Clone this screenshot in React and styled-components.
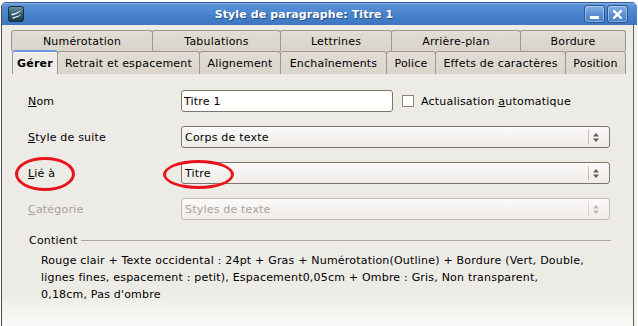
import React from 'react';
import styled, { createGlobalStyle } from 'styled-components';

const GlobalStyle = createGlobalStyle`
  html, body {
    margin: 0;
    padding: 0;
    background: #fff;
    overflow: hidden;
  }
  body {
    font-family: "DejaVu Sans", "Liberation Sans", sans-serif;
    font-size: 11px;
    letter-spacing: 0.2px;
    color: #000;
  }
`;

const Window = styled.div`
  margin: 2px 0 0 1px;
  width: 636px;
  height: 324px;
  box-sizing: border-box;
  display: flex;
  flex-direction: column;
  border-radius: 5px 5px 0 0;
  overflow: hidden;
  border-left: 1px solid #4e4e4e;
  background: #f4f2ef;
`;

const TitleBar = styled.div`
  height: 23px;
  flex: none;
  box-sizing: border-box;
  display: flex;
  align-items: center;
  padding: 0 9px 0 6px;
  border-top: 1px solid #355f98;
  background: linear-gradient(to bottom, #8cb4e6 0, #5a91d6 2px, #4883cd 50%, #3d76c2 100%);
`;

const TitleText = styled.div`
  flex: 1;
  text-align: center;
  color: #fff;
  font-weight: bold;
  font-size: 11px;
  letter-spacing: 0.1px;
  text-shadow: 1px 1px 0 #2b4f80;
`;

const WinButtons = styled.div`
  display: flex;
  gap: 2px;
`;

const WinButton = styled.div`
  width: 21px;
  height: 18px;
  box-sizing: border-box;
  border: 1px solid #2b5691;
  border-radius: 3px;
  background: linear-gradient(to bottom, #86b0e4, #5a8fd3 55%, #4c82c8);
  box-shadow: inset 0 0 0 1px rgba(255, 255, 255, 0.35);
  display: flex;
  align-items: ${(p) => (p.$kind === 'min' ? 'flex-end' : 'center')};
  justify-content: center;
  padding-bottom: ${(p) => (p.$kind === 'min' ? '3px' : '0')};
`;

const Body = styled.div`
  flex: 1;
  display: flex;
  flex-direction: column;
  margin-right: 3px;
  border-right: 1px solid #5e5e5e;
  padding: 5px 0 0 9px;
  background: linear-gradient(to bottom, #edebe6 0, #edebe6 268px, #fbfaf8 301px);
`;

const TabRow = styled.div`
  display: flex;
  align-items: flex-end;
  height: ${(p) => p.$h}px;
  margin-left: ${(p) => p.$indent}px;
`;

const Tab = styled.div`
  box-sizing: border-box;
  width: ${(p) => p.$w}px;
  height: ${(p) => (p.$active ? 24 : p.$h)}px;
  margin-left: -1px;
  &:first-child {
    margin-left: 0;
  }
  display: flex;
  align-items: center;
  justify-content: center;
  white-space: nowrap;
  border: 1px solid #9d968a;
  border-bottom: none;
  border-radius: 3px 3px 0 0;
  background: ${(p) => (p.$active ? '#efece7' : 'linear-gradient(to bottom, #e2ddd5, #d9d3c9)')};
  ${(p) => p.$active && `
    border-top: 2px solid #6a9bd9;
    box-shadow: inset 0 1px 0 #fff;
    font-weight: bold;
    position: relative;
    z-index: 1;
  `}
`;

const Panel = styled.div`
  width: 615px;
  box-sizing: border-box;
  padding: 16px 16px 0 17px;
`;

const Form = styled.div`
  display: grid;
  grid-template-columns: 153px 429px;
  grid-auto-rows: 22px;
  row-gap: 14px;
`;

const Label = styled.div`
  position: relative;
  display: flex;
  align-items: center;
  color: ${(p) => (p.$disabled ? '#a7a297' : '#000')};
`;

const Mn = styled.span`
  text-decoration: underline;
`;

const Cell = styled.div`
  position: relative;
  display: flex;
  align-items: center;
`;

const TextInput = styled.div`
  width: 212px;
  height: 22px;
  box-sizing: border-box;
  border: 1px solid #7d766a;
  border-radius: 3px;
  background: #fff;
  display: flex;
  align-items: center;
  padding-left: 2px;
`;

const Check = styled.div`
  width: 12px;
  height: 12px;
  box-sizing: border-box;
  border: 1px solid #8a8478;
  background: #fff;
  margin-left: 9px;
  margin-right: 7px;
`;

const Select = styled.div`
  width: 429px;
  height: 22px;
  box-sizing: border-box;
  border: 1px solid ${(p) => (p.$disabled ? '#c2bcb1' : '#7d766a')};
  border-radius: 3px;
  background: linear-gradient(to bottom, #fbfaf9, #efece8);
  display: flex;
  align-items: center;
  padding-left: 3px;
  color: ${(p) => (p.$disabled ? '#a7a297' : '#000')};
`;

const SelectValue = styled.div`
  flex: 1;
`;

const SelectSep = styled.div`
  width: 1px;
  height: 14px;
  background: ${(p) => (p.$disabled ? '#dcd8d0' : '#c4beb4')};
  margin-right: 3px;
`;

const SelectArrows = styled.div`
  width: 16px;
  display: flex;
  justify-content: flex-start;
  padding-left: 1px;
`;

const Circle = styled.div`
  position: absolute;
  left: ${(p) => p.$x}px;
  top: ${(p) => p.$y}px;
  width: ${(p) => p.$w}px;
  height: ${(p) => p.$h}px;
  box-sizing: border-box;
  border: 3px solid #e8141a;
  border-radius: 50%;
  pointer-events: none;
`;

const SectionHead = styled.div`
  display: flex;
  align-items: center;
  margin: 14px -1px 0 1px;
  line-height: 13px;
`;

const SectionLine = styled.div`
  flex: 1;
  height: 1px;
  background: #aca69b;
  margin-left: 4px;
`;

const Summary = styled.div`
  margin-top: 5px;
  padding-left: 13px;
  line-height: 17px;
`;

const SummaryLine = styled.div`
  white-space: nowrap;
`;

const AppIcon = () => (
  <svg width="16" height="16" viewBox="0 0 16 16">
    <defs>
      <linearGradient id="ooig" x1="0" y1="0" x2="0" y2="1">
        <stop offset="0" stopColor="#6a97a6" />
        <stop offset="0.5" stopColor="#345d6d" />
        <stop offset="1" stopColor="#1b3745" />
      </linearGradient>
    </defs>
    <rect x="0.5" y="0.5" width="15" height="15" rx="2" fill="url(#ooig)" stroke="#1a2e38" />
    <path d="M3 8.5 C5.5 6.8 8.5 7.6 13 4.2 C11 7.6 7.8 8 4.2 9.6 Z" fill="#fff" />
    <path d="M4 12 C6.5 10.2 9.2 10.8 13 8.2 C11.2 11 8.5 11.2 5 12.8 Z" fill="#fff" />
  </svg>
);

const MinGlyph = () => (
  <svg width="9" height="3" viewBox="0 0 9 3">
    <rect x="0" y="0" width="9" height="3" fill="#fff" />
  </svg>
);

const CloseGlyph = () => (
  <svg width="9" height="9" viewBox="0 0 9 9">
    <path d="M1 1 L8 8 M8 1 L1 8" stroke="#fff" strokeWidth="2.4" strokeLinecap="square" />
  </svg>
);

const SpinArrows = ({ color }) => (
  <svg width="6" height="11" viewBox="0 0 6 11">
    <path d="M0 4.5 L3 1 L6 4.5 Z" fill={color} />
    <path d="M0 6.5 L3 10 L6 6.5 Z" fill={color} />
  </svg>
);

const Combo = ({ value, disabled }) => (
  <Select $disabled={disabled}>
    <SelectValue>{value}</SelectValue>
    <SelectSep $disabled={disabled} />
    <SelectArrows>
      <SpinArrows color={disabled ? '#bdb8ae' : '#5f5a52'} />
    </SelectArrows>
  </Select>
);

const topTabs = [
  { label: 'Numérotation', w: 142 },
  { label: 'Tabulations', w: 129 },
  { label: 'Lettrines', w: 112 },
  { label: 'Arrière-plan', w: 130 },
  { label: 'Bordure', w: 106 },
];

const bottomTabs = [
  { label: 'Gérer', w: 46, active: true },
  { label: 'Retrait et espacement', w: 143 },
  { label: 'Alignement', w: 82 },
  { label: 'Enchaînements', w: 107 },
  { label: 'Police', w: 50 },
  { label: 'Effets de caractères', w: 131 },
  { label: 'Position', w: 61 },
];

export default function App() {
  return (
    <>
      <GlobalStyle />
      <Window>
        <TitleBar>
          <AppIcon />
          <TitleText>Style de paragraphe: Titre 1</TitleText>
          <WinButtons>
            <WinButton $kind="min"><MinGlyph /></WinButton>
            <WinButton $kind="close"><CloseGlyph /></WinButton>
          </WinButtons>
        </TitleBar>
        <Body>
          <TabRow $h={21} $indent={0}>
            {topTabs.map((t) => (
              <Tab key={t.label} $w={t.w} $h={21}>{t.label}</Tab>
            ))}
          </TabRow>
          <TabRow $h={23} $indent={1}>
            {bottomTabs.map((t) => (
              <Tab key={t.label} $w={t.w} $h={23} $active={t.active}>{t.label}</Tab>
            ))}
          </TabRow>
          <Panel>
            <Form>
              <Label><span><Mn>N</Mn>om</span></Label>
              <Cell>
                <TextInput>Titre 1</TextInput>
                <Check />
                <span>Actualisation <Mn>a</Mn>utomatique</span>
              </Cell>

              <Label><span><Mn>S</Mn>tyle de suite</span></Label>
              <Cell><Combo value="Corps de texte" /></Cell>

              <Label>
                <span><Mn>L</Mn>ié à</span>
                <Circle $x={-13} $y={-5} $w={60} $h={34} />
              </Label>
              <Cell>
                <Combo value="Titre" />
                <Circle $x={-18} $y={-2} $w={71} $h={29} />
              </Cell>

              <Label $disabled><span><Mn>C</Mn>atégorie</span></Label>
              <Cell><Combo value="Styles de texte" disabled /></Cell>
            </Form>

            <SectionHead>
              <span>Contient</span>
              <SectionLine />
            </SectionHead>
            <Summary>
              <SummaryLine>Rouge clair + Texte occidental : 24pt + Gras + Numérotation(Outline) + Bordure (Vert, Double,</SummaryLine>
              <SummaryLine>lignes fines, espacement : petit), Espacement0,05cm + Ombre : Gris, Non transparent,</SummaryLine>
              <SummaryLine>0,18cm, Pas d'ombre</SummaryLine>
            </Summary>
          </Panel>
        </Body>
      </Window>
    </>
  );
}
